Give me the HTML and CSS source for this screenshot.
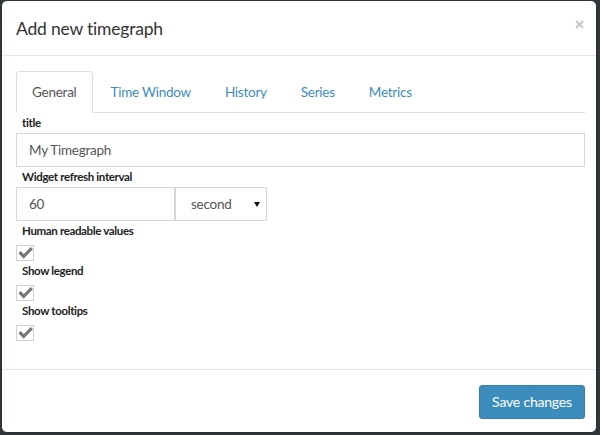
FILE: index.html
```html
<!DOCTYPE html>
<html lang="en">
<head>
<meta charset="utf-8">
<title>Add new timegraph</title>
<link rel="stylesheet" href="styles.css">
</head>
<body class="backdrop">
  <div class="modal">
    <div class="modal-header">
      <h4 class="modal-title">Add new timegraph</h4>
      <button class="close" type="button" aria-label="Close">
        <svg width="9" height="9" viewBox="0 0 9 9"><path d="M1 1 L8 8 M8 1 L1 8" stroke="#c6c6c6" stroke-width="2" fill="none"/></svg>
      </button>
    </div>
    <div class="modal-body">
      <ul class="tabs">
        <li class="tab active"><a>General</a></li>
        <li class="tab"><a>Time Window</a></li>
        <li class="tab"><a>History</a></li>
        <li class="tab"><a>Series</a></li>
        <li class="tab"><a>Metrics</a></li>
      </ul>
      <div class="tab-content">
        <label class="lbl">title</label>
        <input class="field" type="text" value="My Timegraph">
        <label class="lbl">Widget refresh interval</label>
        <div class="interval-row">
          <input class="field num" type="text" value="60">
          <div class="select"><span class="select-text">second</span><span class="caret"></span></div>
        </div>
        <label class="lbl">Human readable values</label>
        <div class="check"><svg width="15" height="14" viewBox="0 0 15 14"><path d="M1.6 6.2 L5.6 10.4 L13.8 2.2" stroke="#777" stroke-width="3.2" fill="none"/></svg></div>
        <label class="lbl">Show legend</label>
        <div class="check"><svg width="15" height="14" viewBox="0 0 15 14"><path d="M1.6 6.2 L5.6 10.4 L13.8 2.2" stroke="#777" stroke-width="3.2" fill="none"/></svg></div>
        <label class="lbl">Show tooltips</label>
        <div class="check last"><svg width="15" height="14" viewBox="0 0 15 14"><path d="M1.6 6.2 L5.6 10.4 L13.8 2.2" stroke="#777" stroke-width="3.2" fill="none"/></svg></div>
      </div>
    </div>
    <div class="modal-footer">
      <button class="btn-primary" type="button">Save changes</button>
    </div>
  </div>
</body>
</html>
```

FILE: styles.css
```css
* { box-sizing: border-box; }

html, body { margin: 0; padding: 0; }

.backdrop {
  background: #30363a;
  width: 600px;
  height: 435px;
  overflow: hidden;
  font-family: "Lato", "Source Sans Pro", "Liberation Sans", sans-serif;
  font-size: 13.5px;
  letter-spacing: -0.25px;
  color: #333;
}

.modal {
  margin-left: 1px;
  width: 596px;
  height: 433px;
  background: #fff;
  border: 1px solid #2a2f33;
  border-radius: 6px;
  display: flex;
  flex-direction: column;
}

.modal-header {
  display: flex;
  justify-content: space-between;
  align-items: flex-start;
  padding: 15px 12px 14px 14px;
  border-bottom: 1px solid #e5e5e5;
}

.modal-title {
  margin: 0;
  font-size: 17.5px;
  font-weight: 400;
  letter-spacing: -0.2px;
  line-height: 25px;
  color: #333;
}

.close {
  margin: 4px 0 0 0;
  padding: 0;
  border: 0;
  background: none;
  width: 9px;
  height: 9px;
  display: block;
  line-height: 0;
}

.modal-body {
  padding: 15px 11px 15px 14px;
}

.tabs {
  list-style: none;
  margin: 0;
  padding: 0;
  display: flex;
  border-bottom: 1px solid #ddd;
}

.tab {
  margin-bottom: -1px;
}

.tab a {
  display: block;
  margin-right: 2px;
  padding: 10px 15px;
  line-height: 20px;
  border: 1px solid transparent;
  border-radius: 4px 4px 0 0;
  color: #3c8dbc;
}

.tab.active a {
  color: #555;
  background: #fff;
  border-color: #ddd #ddd transparent;
}

.tab-content {
  display: flex;
  flex-direction: column;
  padding-bottom: 13px;
}

.lbl {
  display: block;
  padding-left: 6px;
  font-size: 11.5px;
  font-weight: 700;
  letter-spacing: -0.35px;
  line-height: 20px;
  color: #222;
}

.field {
  display: block;
  width: 100%;
  height: 34px;
  margin: 0;
  padding: 6px 12px;
  font-family: inherit;
  font-size: 13.5px;
  letter-spacing: -0.25px;
  line-height: 20px;
  color: #555;
  background: #fff;
  border: 1px solid #d2d6de;
  border-radius: 0;
  outline: none;
}

.interval-row {
  display: flex;
}

.field.num {
  width: 159px;
}

.select {
  width: 92px;
  height: 34px;
  display: flex;
  align-items: center;
  justify-content: space-between;
  padding: 0 6px 0 15px;
  border: 1px solid #d2d6de;
  color: #555;
  background: #fff;
}

.caret {
  width: 0;
  height: 0;
  border-left: 3px solid transparent;
  border-right: 3px solid transparent;
  border-top: 5px solid #111;
  margin-top: 1px;
}

.check {
  width: 18px;
  height: 16px;
  margin-top: 4px;
  border: 1px solid #d0d0d0;
  background: #fff;
  display: flex;
  align-items: center;
  justify-content: center;
}

.modal-footer {
  border-top: 1px solid #e5e5e5;
  padding: 15px 11px 13px 14px;
  display: flex;
  justify-content: flex-end;
}

.btn-primary {
  width: 106px;
  height: 34px;
  padding: 6px 0;
  font-family: inherit;
  font-size: 14px;
  letter-spacing: -0.2px;
  line-height: 20px;
  color: #fff;
  background: #3c8dbc;
  border: 1px solid #367fa9;
  border-radius: 3px;
}
```
